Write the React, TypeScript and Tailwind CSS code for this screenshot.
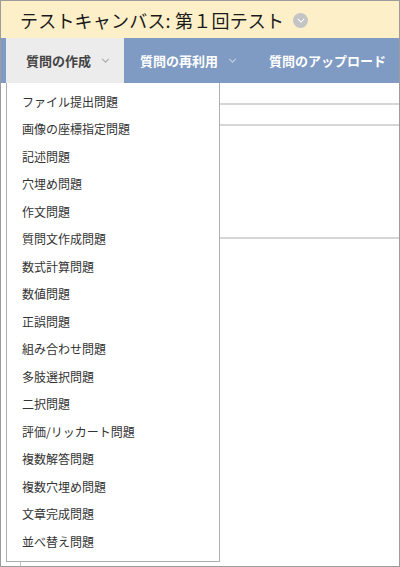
import React from 'react';

const jp = { fontFamily: '"Noto Sans CJK JP", "Noto Sans", sans-serif' };

const questionTypes = [
  'ファイル提出問題',
  '画像の座標指定問題',
  '記述問題',
  '穴埋め問題',
  '作文問題',
  '質問文作成問題',
  '数式計算問題',
  '数値問題',
  '正誤問題',
  '組み合わせ問題',
  '多肢選択問題',
  '二択問題',
  '評価/リッカート問題',
  '複数解答問題',
  '複数穴埋め問題',
  '文章完成問題',
  '並べ替え問題',
];

function Chevron({ className }: { className?: string }) {
  return (
    <svg viewBox="0 0 10 6" className={className} fill="none" stroke="currentColor" strokeWidth="1.3">
      <polyline points="1,1 5,5 9,1" />
    </svg>
  );
}

export default function App() {
  return (
    <div className="relative w-[400px] h-[567px] overflow-hidden border border-[#9c9c9c] bg-white" style={jp}>
      {/* Title bar */}
      <div className="h-[37px] bg-[#fdf0c9] flex items-center pl-[19px] gap-[9px]">
        <span className="text-[18px] text-[#1a1a1a] leading-none tracking-[0.2px]">テストキャンバス: 第１回テスト</span>
        <span className="w-[15px] h-[15px] rounded-full bg-[#c4c4c4] flex items-center justify-center mt-[2px]">
          <Chevron className="w-[8px] h-[5px] text-white" />
        </span>
      </div>

      {/* Nav tabs */}
      <div className="h-[45px] bg-[#7f9bc3] flex pl-[5px]">
        <div className="w-[118px] bg-[#ececec] flex items-center pl-[20px] gap-[10px] text-[#444] text-[13px] font-bold">
          <span>質問の作成</span>
          <Chevron className="w-[9px] h-[5px] text-[#aaaaaa]" />
        </div>
        <div className="flex items-center pl-[16px] gap-[10px] text-white text-[13px] font-bold">
          <span>質問の再利用</span>
          <Chevron className="w-[9px] h-[5px] text-[#c3cfe0]" />
        </div>
        <div className="flex items-center pl-[32px] text-white text-[13px] font-bold whitespace-nowrap">
          <span>質問のアップロード</span>
        </div>
      </div>

      {/* Content underneath */}
      <div className="ml-[19px] h-[483px] border-l border-[#c9c9c9]">
        <div className="h-[22px] border-b-2 border-[#d6d6d6]" />
        <div className="h-[21px] border-b-2 border-[#d6d6d6]" />
        <div className="h-[113px] border-b-2 border-[#d6d6d6]" />
      </div>

      {/* Dropdown menu */}
      <div className="absolute left-[5px] top-[82px] w-[214px] h-[479px] bg-white border border-[#aeaeae] border-t-0 pt-[5px]">
        {questionTypes.map((t) => (
          <div key={t} className="h-[27.5px] flex items-center pl-[15px] text-[12px] text-[#333]">
            {t}
          </div>
        ))}
      </div>
    </div>
  );
}
